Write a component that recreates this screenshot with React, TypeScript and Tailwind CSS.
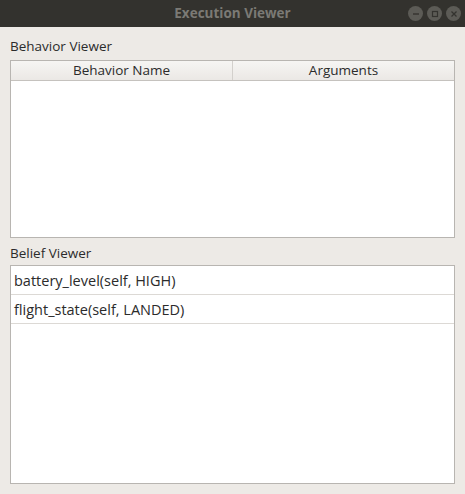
const beliefs = ['battery_level(self, HIGH)', 'flight_state(self, LANDED)']

function WinButton({ kind }: { kind: 'min' | 'max' | 'close' }) {
  return (
    <div className="flex h-[15px] w-[15px] items-center justify-center rounded-full bg-[#5c5b56]">
      <svg width="8" height="8" viewBox="0 0 8 8" className="text-[#34332f]">
        {kind === 'min' && <path d="M1 4h6" stroke="currentColor" strokeWidth="1.4" />}
        {kind === 'max' && <rect x="1.5" y="1.5" width="5" height="5" fill="none" stroke="currentColor" strokeWidth="1.2" />}
        {kind === 'close' && <path d="M1.5 1.5l5 5M6.5 1.5l-5 5" stroke="currentColor" strokeWidth="1.3" />}
      </svg>
    </div>
  )
}

export default function App() {
  return (
    <div
      className="flex h-[494px] w-[465px] flex-col bg-[#edeae6] text-[13.5px] text-[#2b2b2b]"
      style={{ fontFamily: '"Open Sans", "Noto Sans", sans-serif' }}
    >
      <div className="relative flex h-[27px] items-center justify-center bg-[#33322e]">
        <span className="text-[13.5px] font-bold text-[#7b7a75]">Execution Viewer</span>
        <div className="absolute right-[4px] top-[6px] flex gap-[4px]">
          <WinButton kind="min" />
          <WinButton kind="max" />
          <WinButton kind="close" />
        </div>
      </div>

      <div className="flex flex-1 flex-col px-[10px] pb-[10px]">
        <div className="mt-[10px] h-[18px] leading-[18px]">Behavior Viewer</div>
        <div className="mt-[5px] flex h-[178px] flex-col border border-[#b8b5b1] bg-white">
          <div className="grid h-[20px] grid-cols-[222px_1fr] border-b border-[#c5c2be] bg-gradient-to-b from-[#f6f5f3] to-[#ebe8e5] leading-[19px]">
            <div className="border-r border-[#d3d0cc] text-center">Behavior Name</div>
            <div className="text-center">Arguments</div>
          </div>
        </div>

        <div className="mt-[6px] h-[18px] leading-[18px]">Belief Viewer</div>
        <div className="mt-[3px] flex flex-1 flex-col border border-[#b8b5b1] bg-white">
          {beliefs.map((b) => (
            <div key={b} className="h-[29px] border-b border-[#dcd9d5] px-[3px] text-[14.5px] leading-[29px]">
              {b}
            </div>
          ))}
        </div>
      </div>
    </div>
  )
}
